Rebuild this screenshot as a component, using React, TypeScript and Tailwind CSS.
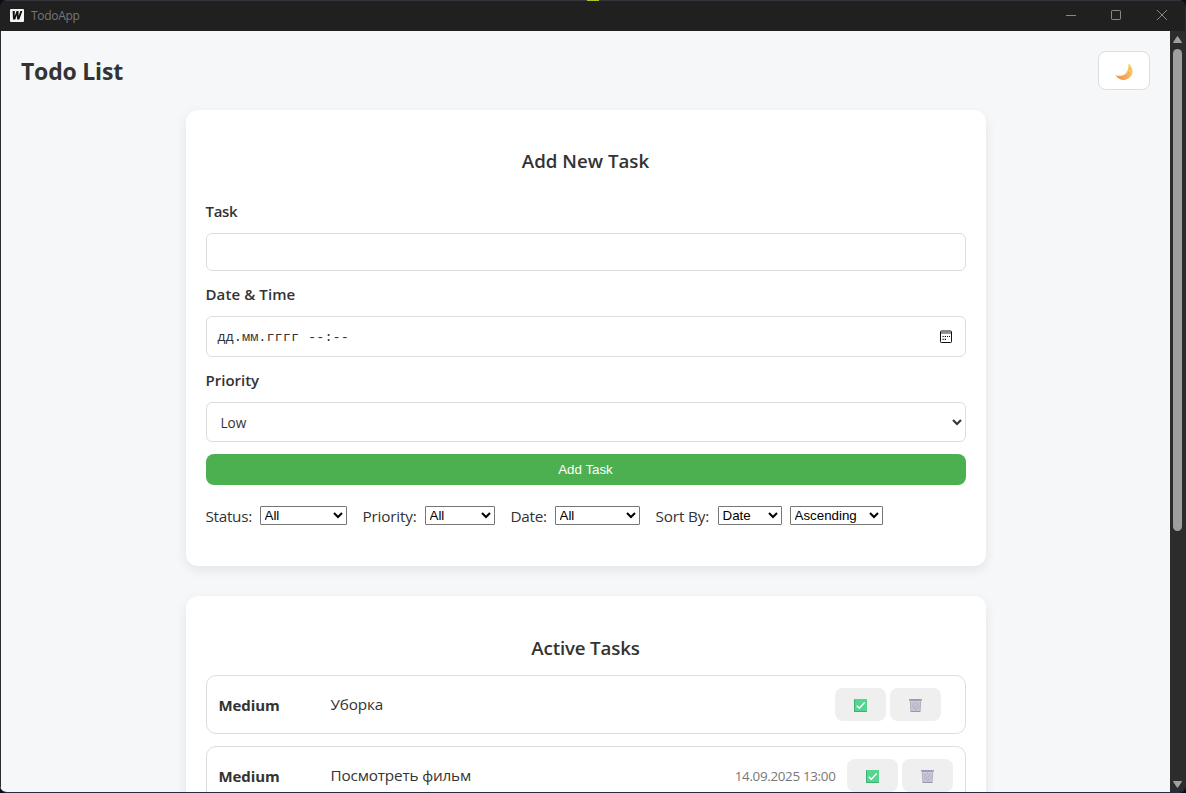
import type { ReactNode } from 'react';

function Label({ children, className }: { children: ReactNode; className: string }) {
  return <div className={`h-[22px] whitespace-nowrap text-[15px] font-semibold leading-[20px] ${className}`}>{children}</div>;
}

function FilterSelect({ value, className }: { value: string; className: string }) {
  return (
    <select className={`h-[19px] rounded-[1px] border border-[#767676] bg-white font-['Liberation_Sans',sans-serif] text-[13.333px] text-black ${className}`}>
      <option>{value}</option>
    </select>
  );
}

function CheckIcon() {
  return (
    <svg width="13" height="13" viewBox="0 0 13 13">
      <rect width="13" height="13" rx="0.6" fill="#3fae77" />
      <rect x="1" width="12" height="12" fill="#55d68f" />
      <path d="M2.7 6.8 5.3 9.2 10.6 3.6" fill="none" stroke="#fff" strokeWidth="1.4" />
    </svg>
  );
}

function BinIcon() {
  return (
    <svg width="13" height="13" viewBox="0 0 13 13">
      <path d="M.8 1.5h11.4L11.4 13H1.6z" fill="#cbc7d6" />
      <path d="M0 0h13v1.8H0z" fill="#aaa4bb" />
      <path d="M1.5 1h10" stroke="#8b859b" strokeWidth="0.7" />
      <path d="M3 4l6 6M6 3l4 4M3 7l4 4M10 4l-6 6M7 3 3 7M10 7l-3 4" stroke="#aea8bf" strokeWidth="0.7" />
      <path d="M1.3 2.5 2 12.4h9L11.7 2.5" fill="none" stroke="#b0abc0" strokeWidth="0.9" />
      <path d="M1.7 12.5h9.6" stroke="#9c96ad" />
    </svg>
  );
}

function TaskRow({ title, date, className }: { title: string; date?: string; className: string }) {
  return (
    <div className={`flex h-[59px] items-center rounded-[10px] border border-[#ddd] pl-3 ${className}`}>
      <div className="w-28 text-[15px] font-bold leading-5"><span className="tracking-[-0.1px]">Medium</span></div>
      <div className="flex-1 whitespace-nowrap pb-[2px] text-[15.3px] leading-5"><span className="tracking-[-0.16px]">{title}</span></div>
      {date && <div className="mr-[11px] whitespace-nowrap text-[13.4px] leading-5 text-[#777]"><span className="tracking-[-0.32px]">{date}</span></div>}
      <button className="mr-1 flex h-[33px] w-[51px] items-center justify-center rounded-lg bg-[#efefef] pt-[2px]"><CheckIcon /></button>
      <button className="flex h-[33px] w-[51px] items-center justify-center rounded-lg bg-[#efefef] pt-[2px]"><BinIcon /></button>
    </div>
  );
}

function TitleBar() {
  return (
    <header className="flex h-[31px] shrink-0 items-center border-t border-[#36353d] bg-[#202020] pl-[10px] text-[#777]">
      <svg className="-mt-px" width="14" height="13" viewBox="0 0 14 13">
        <rect width="14" height="13" rx="1" fill="#f4f4f4" />
        <path d="M2.6 2h2.2l-.1 5L6.6 2h1.9l.1 5 1.8-5h2L9.3 10.5H7.1L7 6 5.2 10.5H3Z" fill="#111" />
      </svg>
      <div className="ml-[7px] flex-1 text-[12px] leading-4"><span className="tracking-[-0.3px]">TodoApp</span></div>
      <svg width="119" height="30" viewBox="0 0 119 30" fill="none" stroke="#888" strokeWidth="1">
        <path d="M0 14.5h10" />
        <rect x="45.5" y="9.5" width="9" height="9" rx="0.7" />
        <path d="m91 9 10 10M101 9 91 19" />
      </svg>
    </header>
  );
}

export default function App() {
  return (
    <div className="relative h-[793px] w-[1186px] bg-[#0b0b14]">
      <div className="flex h-full w-full flex-col overflow-hidden rounded-[7px] border-b border-r border-[#2b2a42] font-['Open_Sans','Noto_Sans',sans-serif] text-[#333]">
        <TitleBar />
        <div className="flex min-h-0 flex-1">
          <main className="w-[1170px] overflow-hidden border-l border-[#2b2b33] bg-[#f5f7f9]">
            <div className="flex h-[79px] items-start justify-between pl-5 pr-5 pt-5">
              <h1 className="h-10 whitespace-nowrap text-[23px] font-bold leading-10"><span className="tracking-[-0.2px]">Todo List</span></h1>
              <button className="flex h-[39px] w-[52px] items-center justify-center rounded-lg border border-[#ddd] bg-white pt-[3px]">
                <svg width="18" height="18" viewBox="0 0 18 18">
                  <defs>
                    <linearGradient id="moon" x1="0" y1="1" x2="1" y2="0">
                      <stop offset="0" stopColor="#f08a45" />
                      <stop offset="0.5" stopColor="#f8b45c" />
                      <stop offset="1" stopColor="#ffd96a" />
                    </linearGradient>
                  </defs>
                  <path d="M13.5.3C17.8 3.8 19 9.3 15.6 13.6 11.5 18.3 4.2 18.3.5 12c4 1.5 8.1 1.2 10.8-2.2C13.6 7 13.2 3.5 13.5.3Z" fill="url(#moon)" />
                  <path d="M14.5 5.6h1M13 10h1.2M10 13.3h1.2M7 14.2h1" stroke="#eca04f" />
                </svg>
              </button>
            </div>

            <section className="mx-auto h-[456px] w-[800px] rounded-xl bg-white px-5 pt-[37px] shadow-[0_4px_12px_rgba(0,0,0,0.08)]">
              <h2 className="h-7 text-center text-[18.72px] font-semibold leading-7"><span>Add New Task</span></h2>
              <Label className="mt-[26px]"><span className="tracking-[-0.3px]">Task</span></Label>
              <input aria-label="Task" className="mt-[10px] block h-[38px] w-full rounded-md border border-[#ddd] bg-white px-2.5" />
              <Label className="mt-[13px]"><span className="tracking-[0.1px]">Date &amp; Time</span></Label>
              <div className="mt-[10px] flex h-[41px] items-center rounded-md border border-[#ddd] pl-[11px] pr-[13px] font-['Liberation_Mono',monospace] text-[13.6px]">
                <span className="pt-[3px]">дд.мм.гггг</span>
                <span className="ml-[9px] flex-1 pt-[3px]">--:--</span>
                <svg width="12" height="13" viewBox="0 0 12 13">
                  <rect x="0.5" y="1" width="11" height="11.5" rx="0.8" fill="none" stroke="#111" />
                  <path d="M1 2.8h10" stroke="#888" strokeWidth="2" />
                  <path d="M1 .5h10" stroke="#888" />
                  <path d="M2.5 6.5h1.2m1 0h1.3m1 0h1m1 0h1M2.5 9.3h1.2m1 0h1.3" stroke="#111" strokeWidth="1.2" />
                </svg>
              </div>
              <Label className="mt-[13px]"><span>Priority</span></Label>
              <select className="mt-[10px] block h-10 w-full rounded-md border border-[#ddd] bg-white pl-[10px] text-[13.6px]"><option>Low</option></select>
              <button className="mt-3 block h-[31px] w-full rounded-lg bg-[#4caf50] text-center font-['Liberation_Sans',sans-serif] text-[13.333px] leading-[31px] text-white"><span>Add Task</span></button>
              <div className="mt-[21px] flex h-[22px] whitespace-nowrap text-[15.3px] leading-[20px]">
                <div className="w-[54px]"><span className="tracking-[-0.3px]">Status:</span></div><FilterSelect value="All" className="w-[87px]" />
                <div className="ml-4 w-[62px]"><span className="tracking-[-0.2px]">Priority:</span></div><FilterSelect value="All" className="w-[70px]" />
                <div className="ml-4 w-11"><span className="tracking-[-0.3px]">Date:</span></div><FilterSelect value="All" className="w-[85px]" />
                <div className="ml-4 w-[62px]"><span className="tracking-[-0.15px]">Sort By:</span></div><FilterSelect value="Date" className="w-[64px]" />
                <FilterSelect value="Ascending" className="ml-2 w-[93px]" />
              </div>
            </section>

            <section className="mx-auto mt-[30px] h-[456px] w-[800px] rounded-xl bg-white px-5 pt-[38px] shadow-[0_4px_12px_rgba(0,0,0,0.08)]">
              <h2 className="h-7 text-center text-[18.72px] font-semibold leading-7"><span className="tracking-[-0.15px]">Active Tasks</span></h2>
              <TaskRow title="Уборка" className="mt-[13px] pr-6" />
              <TaskRow title="Посмотреть фильм" date="14.09.2025 13:00" className="mt-3 pr-3" />
            </section>
          </main>
          <aside className="flex w-[15px] flex-col items-center bg-[#2c2c2c] pt-[5px]">
            <svg width="9" height="7" viewBox="0 0 9 7"><path d="M4.5.5 8.5 6.5H.5Z" fill="#a0a0a0" stroke="#a0a0a0" strokeLinejoin="round" /></svg>
            <div className="mt-[6px] h-[482px] w-[9px] rounded-full bg-[#9f9f9f]" />
            <svg className="mb-1 mt-auto" width="9" height="7" viewBox="0 0 9 7"><path d="M.5.5h8L4.5 6.5Z" fill="#a0a0a0" stroke="#a0a0a0" strokeLinejoin="round" /></svg>
          </aside>
        </div>
      </div>
      <div className="absolute left-[587px] top-0 h-px w-3 bg-[#a7c828]" />
    </div>
  );
}
